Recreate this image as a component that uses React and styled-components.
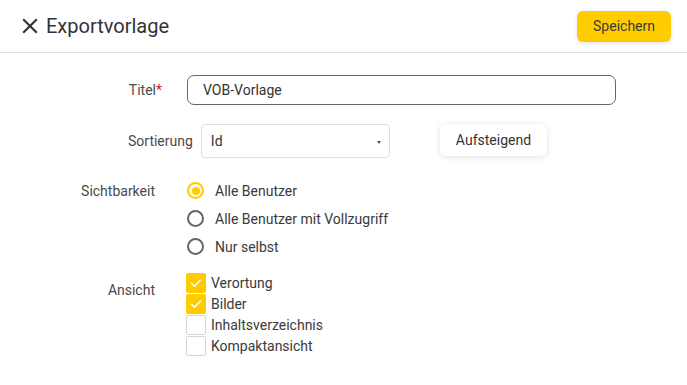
import React from 'react';
import styled, { createGlobalStyle } from "styled-components";

const GlobalStyle = createGlobalStyle`
	body {
		margin: 0;
		background: #fff;
		font-family: Roboto, "Liberation Sans", sans-serif;
		color: #3a3a3a;
	}
`

const Header = styled.header`
	display: flex;
	align-items: center;
	justify-content: space-between;
	height: 52px;
	padding: 0 16px 0 17px;
	border-bottom: 1px solid #e2e2e2;
`

const TitleBlock = styled.div`
	display: flex;
	align-items: center;
	gap: 3px;
`

const Title = styled.h1`
	margin: 0;
	font-size: 20px;
	font-weight: 400;
	color: #2f343b;
`

const SaveButton = styled.button`
	height: 31px;
	padding: 0 16px;
	border: none;
	border-radius: 6px;
	background: #ffcc00;
	color: #3b3b3b;
	font-family: inherit;
	font-size: 14px;
	font-weight: 400;
	box-shadow: 0 1px 4px rgba(0, 0, 0, 0.12);
`

const Form = styled.div`
	display: flex;
	flex-direction: column;
	padding-top: 22px;
`

const Row = styled.div`
	display: grid;
	grid-template-columns: 155px 1fr;
	column-gap: 32px;
	align-items: ${p => p.$align || 'center'};
	margin-bottom: ${p => p.$gap || 0}px;
`

const Label = styled.label`
	text-align: right;
	font-size: 14px;
	color: #4a4a4a;
	padding-top: ${p => p.$top || 0}px;
`

const Required = styled.span`
	color: #e02020;
	margin-right: -7px;
`

const TextInput = styled.div`
	width: 429px;
	height: 30px;
	box-sizing: border-box;
	border: 1px solid #666;
	border-radius: 7px;
	padding: 0 15px;
	display: flex;
	align-items: center;
	font-size: 14px;
	color: #333;
`

const SortRow = styled.div`
	display: flex;
	align-items: center;
	padding-left: 128px;
	margin: 19px 0 24px;
`

const SortLabel = styled.span`
	font-size: 14px;
	color: #4a4a4a;
	margin-right: 8px;
`

const Select = styled.div`
	width: 189px;
	height: 34px;
	box-sizing: border-box;
	border: 1px solid #e0e0e0;
	border-radius: 4px;
	padding: 0 8px 0 9px;
	display: flex;
	align-items: center;
	justify-content: space-between;
	font-size: 14px;
	color: #333;
`

const Caret = styled.span`
	width: 0;
	height: 0;
	border-left: 2.5px solid transparent;
	border-right: 2.5px solid transparent;
	border-top: 3px solid #555;
	margin-top: 3px;
`

const OrderButton = styled.button`
	margin-left: 50px;
	margin-top: -3px;
	height: 32px;
	padding: 0 16px;
	border: none;
	border-radius: 6px;
	background: #fff;
	color: #333;
	font-family: inherit;
	font-size: 14px;
	font-weight: 400;
	box-shadow: 0 1px 6px rgba(0, 0, 0, 0.12);
`

const OptionList = styled.div`
	display: flex;
	flex-direction: column;
	gap: ${p => p.$gap}px;
`

const Option = styled.div`
	display: flex;
	align-items: center;
	gap: ${p => p.$gap}px;
	font-size: 14px;
	color: #3a3a3a;
	height: ${p => p.$h}px;
`

const Radio = styled.span`
	width: 17px;
	height: 17px;
	box-sizing: border-box;
	border-radius: 50%;
	border: 2px solid ${p => p.$on ? '#ffcc00' : '#666'};
	display: flex;
	align-items: center;
	justify-content: center;
	&::after {
		content: '';
		width: 8px;
		height: 8px;
		border-radius: 50%;
		background: ${p => p.$on ? '#ffcc00' : 'transparent'};
	}
`

const Box = styled.span`
	width: 20px;
	height: 20px;
	box-sizing: border-box;
	border-radius: 2px;
	border: 1px solid ${p => p.$on ? '#ffcc00' : '#d6d6d6'};
	background: ${p => p.$on ? '#ffcc00' : '#fff'};
	display: flex;
	align-items: center;
	justify-content: center;
`

const CloseIcon = () => (
	<svg width="26" height="26" viewBox="0 0 24 24" fill="#2f343b">
		<path d="M19 6.41L17.59 5 12 10.59 6.41 5 5 6.41 10.59 12 5 17.59 6.41 19 12 13.41 17.59 19 19 17.59 13.41 12z"/>
	</svg>
)

const Check = () => (
	<svg width="14" height="14" viewBox="0 0 14 14" fill="none">
		<path d="M2.5 7.2l3 3 6-6.2" stroke="#fff" strokeWidth="1.6" strokeLinecap="round" strokeLinejoin="round"/>
	</svg>
)

const visibility = [
	{label: 'Alle Benutzer', on: true},
	{label: 'Alle Benutzer mit Vollzugriff', on: false},
	{label: 'Nur selbst', on: false},
]

const views = [
	{label: 'Verortung', on: true},
	{label: 'Bilder', on: true},
	{label: 'Inhaltsverzeichnis', on: false},
	{label: 'Kompaktansicht', on: false},
]

const App = () => {
	return (
		<>
			<GlobalStyle/>
			<Header>
				<TitleBlock>
					<CloseIcon/>
					<Title>Exportvorlage</Title>
				</TitleBlock>
				<SaveButton>Speichern</SaveButton>
			</Header>

			<Form>
				<Row>
					<Label>Titel<Required>*</Required></Label>
					<TextInput>VOB-Vorlage</TextInput>
				</Row>

				<SortRow>
					<SortLabel>Sortierung</SortLabel>
					<Select>Id<Caret/></Select>
					<OrderButton>Aufsteigend</OrderButton>
				</SortRow>

				<Row $align={'start'} $gap={18}>
					<Label $top={1}>Sichtbarkeit</Label>
					<OptionList $gap={11}>
						{visibility.map(v => (
							<Option key={v.label} $gap={11} $h={17}>
								<Radio $on={v.on}/>
								{v.label}
							</Option>
						))}
					</OptionList>
				</Row>

				<Row $align={'start'}>
					<Label $top={9}>Ansicht</Label>
					<OptionList $gap={1}>
						{views.map(v => (
							<Option key={v.label} $gap={5} $h={20} style={{marginLeft: -1}}>
								<Box $on={v.on}>{v.on && <Check/>}</Box>
								{v.label}
							</Option>
						))}
					</OptionList>
				</Row>
			</Form>
		</>
	);
}

export default App
